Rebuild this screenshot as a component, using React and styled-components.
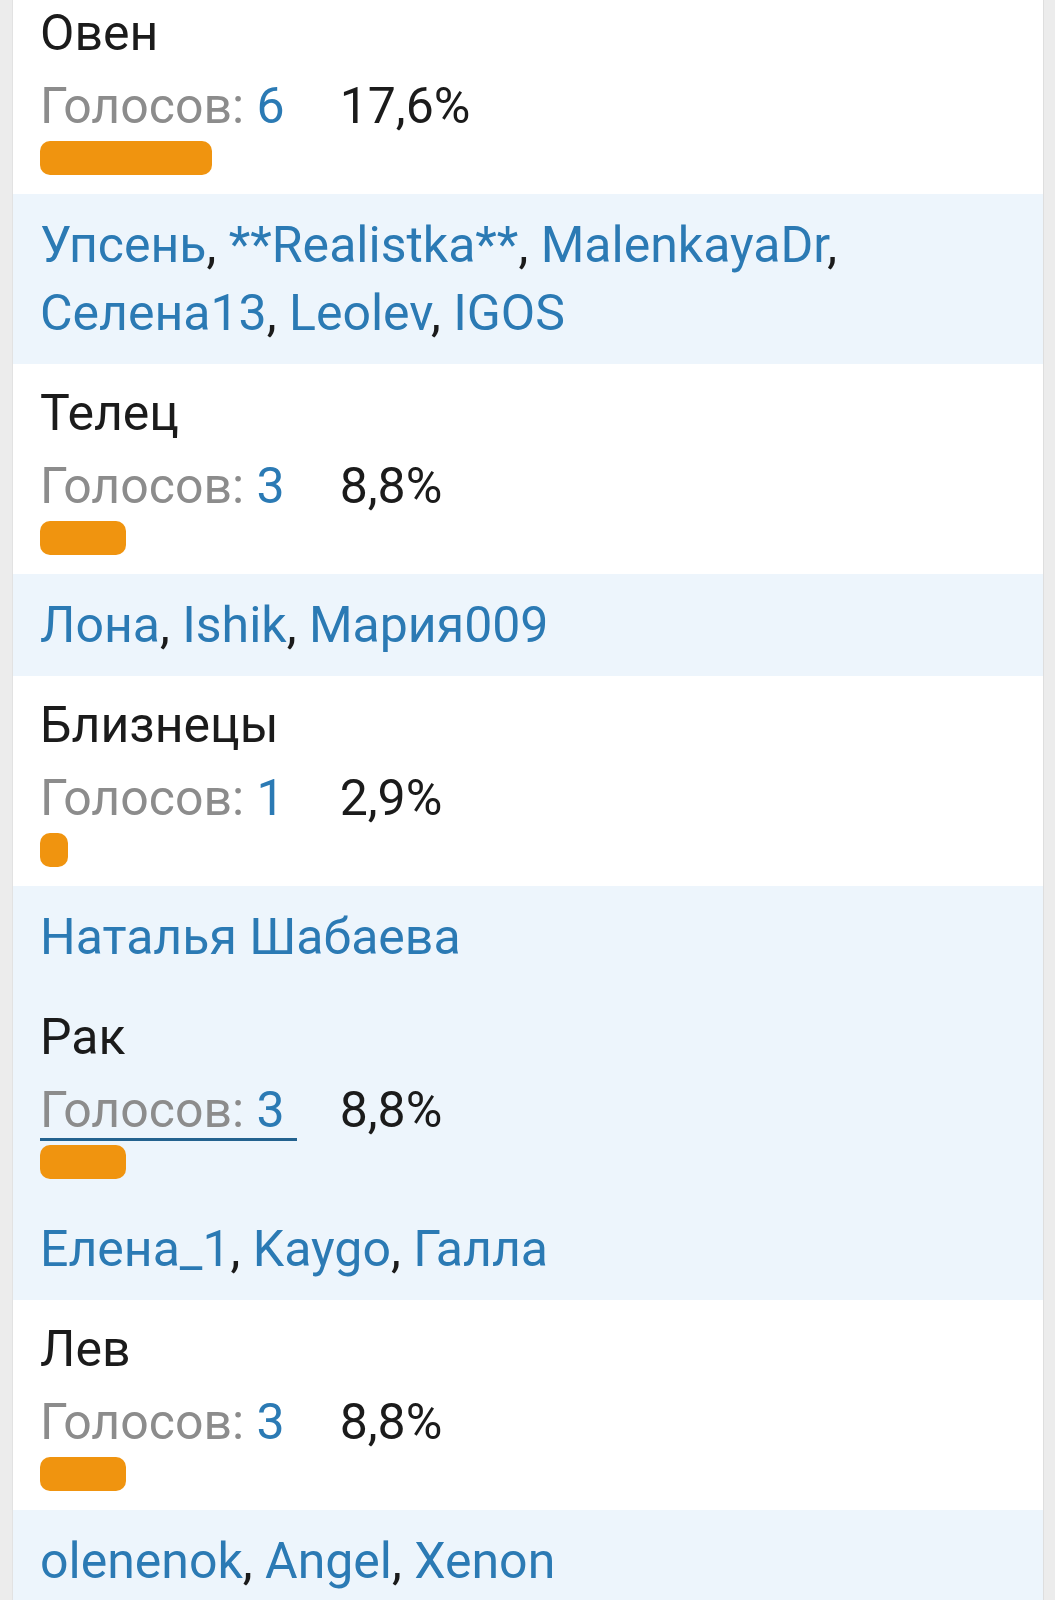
import React from "react";
import styled, { createGlobalStyle } from "styled-components";

const Global = createGlobalStyle`
  html, body { margin: 0; padding: 0; }
  body {
    background: #ececec;
    font-family: Roboto, "Noto Sans", "Liberation Sans", sans-serif;
    overflow: hidden;
  }
`;

const Panel = styled.div`
  margin: -16px 12px 0 13px;
  background: #ffffff;
  box-shadow: -1px 0 0 #e2e2e2, 1px 0 0 #dedede;
`;

const Option = styled.section`
  padding: 17px 27px 19px;
  background: ${(p) => (p.$active ? "#edf5fc" : "#ffffff")};
`;

const Title = styled.div`
  font-size: 50px;
  line-height: 64px;
  color: #1b1b1b;
`;

const VotesRow = styled.div`
  display: flex;
  align-items: baseline;
  margin-top: 9px;
  font-size: 50px;
  line-height: 64px;
`;

const VotesLink = styled.a`
  display: inline-block;
  color: #8c8c8c;
  text-decoration: none;
  padding-right: 12px;
  line-height: 56px;
  border-bottom: 3px solid ${(p) => (p.$focused ? "#23628f" : "transparent")};
`;

const Count = styled.span`
  color: #2b7ab4;
`;

const Percent = styled.span`
  margin-left: 43px;
  color: #1b1b1b;
`;

const Bar = styled.div`
  margin-top: 3px;
  height: 34px;
  border-radius: 10px;
  background: #f0940f;
  min-width: 28px;
`;

const Voters = styled.div`
  padding: 17px 27px 17px;
  background: #edf5fc;
  font-size: 50px;
  line-height: 68px;
  color: #1b1b1b;
`;

const Voter = styled.a`
  color: #2b7ab4;
  text-decoration: none;
`;

const data = [
  { name: "Овен", votes: 6, pct: "17,6", voters: ["Упсень", "**Realistka**", "MalenkayaDr", "Селена13", "Leolev", "IGOS"] },
  { name: "Телец", votes: 3, pct: "8,8", voters: ["Лона", "Ishik", "Мария009"] },
  { name: "Близнецы", votes: 1, pct: "2,9", voters: ["Наталья Шабаева"] },
  { name: "Рак", votes: 3, pct: "8,8", voters: ["Елена_1", "Kaygo", "Галла"], active: true },
  { name: "Лев", votes: 3, pct: "8,8", voters: ["olenenok", "Angel", "Xenon"] },
];

export default function App() {
  return (
    <>
      <Global />
      <Panel>
        {data.map((d) => (
          <React.Fragment key={d.name}>
            <Option $active={d.active}>
              <Title>{d.name}</Title>
              <VotesRow>
                <VotesLink href="#" $focused={d.active}>
                  Голосов: <Count>{d.votes}</Count>
                </VotesLink>
                <Percent>{d.pct}%</Percent>
              </VotesRow>
              <Bar style={{ width: `${parseFloat(d.pct.replace(",", "."))}%` }} />
            </Option>
            <Voters>
              {d.voters.map((v, i) => (
                <React.Fragment key={v}>
                  <Voter href="#">{v}</Voter>
                  {i < d.voters.length - 1 ? ", " : ""}
                </React.Fragment>
              ))}
            </Voters>
          </React.Fragment>
        ))}
      </Panel>
    </>
  );
}
